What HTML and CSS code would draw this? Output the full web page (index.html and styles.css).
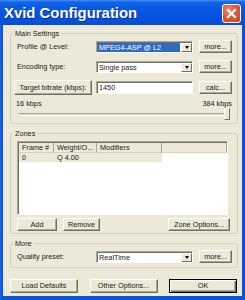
FILE: index.html
```html
<!DOCTYPE html>
<html>
<head>
<meta charset="utf-8">
<title>Xvid Configuration</title>
<link rel="stylesheet" href="styles.css">
</head>
<body>
<div class="window">
  <div class="titlebar">
    <span class="title">Xvid Configuration</span>
    <span class="close"><svg width="17" height="17" viewBox="0 0 17 17"><path d="M5 5 L12 12 M12 5 L5 12" stroke="#fff" stroke-width="2.2" stroke-linecap="square" fill="none"/></svg></span>
  </div>
  <div class="client">
    <section class="group group-main">
      <div class="gtitle">Main Settings</div>
      <div class="grid">
        <span class="lbl">Profile @ Level:</span>
        <div class="combo"><span class="cval"><span class="sel">MPEG4-ASP @ L2</span></span><span class="drop"><i></i></span></div>
        <button class="btn">more...</button>

        <span class="lbl">Encoding type:</span>
        <div class="combo"><span class="cval">Single pass</span><span class="drop"><i></i></span></div>
        <button class="btn">more...</button>

        <button class="btn btn-target">Target bitrate (kbps):</button>
        <div class="edit">1450</div>
        <button class="btn">calc...</button>
      </div>
      <div class="range"><span>16 kbps</span><span>384 kbps</span></div>
      <div class="slider"><div class="track"></div><div class="thumb"></div></div>
    </section>

    <section class="group group-zones">
      <div class="gtitle">Zones</div>
      <div class="list">
        <div class="lhead">
          <span class="hcell">Frame #</span>
          <span class="hcell">Weight/O...</span>
          <span class="hcell">Modifiers</span>
          <span class="hcell"></span>
        </div>
        <div class="lrow">
          <span class="rcell">0</span>
          <span class="rcell">Q 4.00</span>
          <span class="rcell"></span>
        </div>
      </div>
      <div class="zbtns">
        <button class="btn btn-add">Add</button>
        <button class="btn btn-remove">Remove</button>
        <button class="btn btn-zone">Zone Options...</button>
      </div>
    </section>

    <section class="group group-more">
      <div class="gtitle">More</div>
      <div class="grid grid-one">
        <span class="lbl">Quality preset:</span>
        <div class="combo"><span class="cval">RealTime</span><span class="drop"><i></i></span></div>
        <button class="btn">more...</button>
      </div>
    </section>

    <div class="footer">
      <button class="btn btn-foot">Load Defaults</button>
      <button class="btn btn-foot">Other Options...</button>
      <button class="btn btn-foot btn-default">OK</button>
    </div>
  </div>
</div>
</body>
</html>
```

FILE: styles.css
```css
* {
  box-sizing: border-box;
  margin: 0;
  padding: 0;
}

html, body {
  width: 245px;
  height: 300px;
  overflow: hidden;
  background: #0a55e0;
}

body {
  font-family: "Liberation Sans", Arial, sans-serif;
  font-size: 7.3px;
  line-height: 9px;
  color: #1a1a1a;
}

.window {
  width: 245px;
  height: 300px;
  display: flex;
  flex-direction: column;
  background: linear-gradient(to right, #2a6ef0 0, #0a55e0 1px, #0a55e0 244px, #0440c4 245px);
}

.titlebar {
  height: 25px;
  flex: none;
  display: flex;
  align-items: center;
  justify-content: space-between;
  padding: 0 4px 0 4px;
  background: linear-gradient(to bottom, #4a92f5 0, #1465e8 2px, #0a5ce4 6px, #0855e0 50%, #0650db 85%, #0a4ccf 100%);
}

.title {
  font-family: "Liberation Sans", Arial, sans-serif;
  font-weight: bold;
  font-size: 14.9px;
  line-height: 16px;
  color: #fff;
  text-shadow: 1px 1px 0 #0a2e9a;
  margin-top: 1px;
}

.close {
  width: 19px;
  height: 19px;
  margin-top: 2px;
  border: 1px solid #fff;
  border-radius: 3px;
  background: radial-gradient(circle at 35% 30%, #f08a6e 0, #e05a3c 45%, #c8401f 100%);
  display: flex;
  align-items: center;
  justify-content: center;
}

.client {
  flex: 1;
  margin: 0 3px 4px 3px;
  background: #ece9d8;
  padding: 8px 4px 0 7px;
  display: flex;
  flex-direction: column;
}

.group {
  border: 1px solid #d0d0bf;
  border-radius: 3px;
  padding: 0 5px 0 6px;
}

.gtitle {
  margin: -5px 0 0 -4px;
  padding: 0 2px;
  width: max-content;
  background: #ece9d8;
  height: 9px;
  line-height: 9px;
}

.grid {
  display: grid;
  grid-template-columns: 79px 103px 33px;
  grid-template-rows: 13px 13px 15px;
  row-gap: 7px;
  align-items: center;
  margin-top: 2px;
}

.grid > .combo,
.grid > .edit {
  width: 97px;
}

.grid-one {
  grid-template-rows: 13px;
}

.lbl {
  white-space: nowrap;
}

.btn {
  font: inherit;
  color: #1a1a1a;
  background: #ece9d8;
  border: 1px solid;
  border-color: #fff #716f64 #716f64 #fff;
  box-shadow: inset -1px -1px 0 #aca899;
  height: 13px;
  line-height: 10px;
  text-align: center;
  white-space: nowrap;
  overflow: hidden;
}

.btn-target {
  margin-left: -3px;
  width: 78px;
  height: 15px;
}

.combo {
  display: flex;
  height: 12px;
  background: #fff;
  border: 1px solid;
  border-color: #aca899 #fff #fff #aca899;
  box-shadow: inset 1px 1px 0 #716f64;
  padding: 1px 0 0 1px;
}

.cval {
  flex: 1;
  display: flex;
  align-items: center;
  padding-left: 1px;
  white-space: nowrap;
  overflow: hidden;
}

.sel {
  display: block;
  width: 100%;
  height: 9px;
  line-height: 9px;
  margin-left: -1px;
  padding-left: 1px;
  background: #316ac5;
  color: #fff;
}

.drop {
  width: 11px;
  flex: none;
  background: #ece9d8;
  border: 1px solid;
  border-color: #fff #716f64 #716f64 #fff;
  display: flex;
  align-items: center;
  justify-content: center;
}

.drop i {
  display: block;
  width: 0;
  height: 0;
  border-left: 2.5px solid transparent;
  border-right: 2.5px solid transparent;
  border-top: 3px solid #000;
}

.edit {
  height: 13px;
  background: #fff;
  border: 1px solid;
  border-color: #aca899 #fff #fff #aca899;
  box-shadow: inset 1px 1px 0 #716f64;
  padding: 1px 0 0 2px;
  line-height: 10px;
}

.range {
  display: flex;
  justify-content: space-between;
  margin: 4px 0 0 -1px;
  height: 9px;
}

.slider {
  display: flex;
  align-items: center;
  height: 12px;
  margin: 0 2px 3px 2px;
}

.track {
  flex: 1;
  height: 3px;
  border-top: 1px solid #aca899;
  border-bottom: 1px solid #fff;
  background: #d8d4c4;
}

.thumb {
  width: 6px;
  height: 12px;
  background: #ece9d8;
  border: 1px solid;
  border-color: #fff #716f64 #716f64 #fff;
}

.group-zones {
  margin-top: 9px;
}

.list {
  margin-top: 3px;
  width: 211px;
  height: 74px;
  background: #fff;
  border: 1px solid;
  border-color: #aca899 #fff #fff #aca899;
  box-shadow: inset 1px 1px 0 #716f64;
  padding: 1px 0 0 1px;
}

.lhead,
.lrow {
  display: grid;
  grid-template-columns: 35px 43px 65px 1fr;
}

.lhead {
  height: 10px;
}

.hcell {
  background: #ece9d8;
  border-right: 1px solid #aca899;
  border-bottom: 1px solid #d6d2c2;
  padding-left: 3px;
  line-height: 9px;
  white-space: nowrap;
  overflow: hidden;
}

.lrow {
  height: 9px;
  grid-template-columns: 35px 43px 65px;
  background: #ece9d8;
  width: 143px;
}

.rcell {
  padding-left: 3px;
  line-height: 9px;
}

.zbtns {
  display: flex;
  margin: 3px 0 2px 0;
  height: 13px;
}

.btn-add {
  width: 40px;
}

.btn-remove {
  width: 37px;
  margin-left: 6px;
}

.btn-zone {
  width: 62px;
  margin-left: auto;
  margin-right: 2px;
}

.group-more {
  margin-top: 9px;
  padding-bottom: 4px;
}

.footer {
  display: flex;
  justify-content: space-between;
  margin-top: 11px;
  padding-right: 1px;
}

.btn-foot {
  width: 68px;
  height: 14px;
}

.btn-default {
  border: 1px solid #000;
  box-shadow: inset 1px 1px 0 #fff, inset -1px -1px 0 #716f64, inset -2px -2px 0 #aca899;
}
```
